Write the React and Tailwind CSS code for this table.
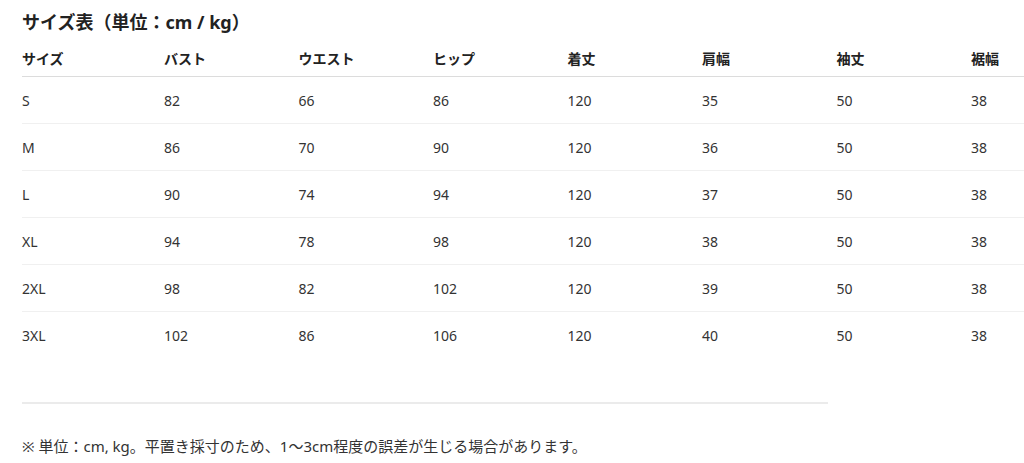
const headers = ['サイズ', 'バスト', 'ウエスト', 'ヒップ', '着丈', '肩幅', '袖丈', '裾幅'];

const rows = [
  ['S', '82', '66', '86', '120', '35', '50', '38'],
  ['M', '86', '70', '90', '120', '36', '50', '38'],
  ['L', '90', '74', '94', '120', '37', '50', '38'],
  ['XL', '94', '78', '98', '120', '38', '50', '38'],
  ['2XL', '98', '82', '102', '120', '39', '50', '38'],
  ['3XL', '102', '86', '106', '120', '40', '50', '38'],
];

export default function App() {
  return (
    <div
      className="min-h-screen w-full overflow-hidden bg-white text-[#333]"
      style={{ fontFamily: '"Noto Sans", "Noto Sans CJK JP", sans-serif' }}
    >
      <div className="pl-[22px] pt-[9px]">
        <h2 className="text-[18px] font-bold leading-[26px] text-[#222]">サイズ表（単位：cm / kg）</h2>

        <div className="mt-[5px] w-[1084px]">
          {/* header */}
          <div className="grid h-[37px] grid-cols-[142px_repeat(7,134.5px)] items-center border-b border-[#dcdcdc] text-[14px] font-semibold text-[#222]">
            {headers.map((h) => (
              <div key={h}>{h}</div>
            ))}
          </div>

          {/* body */}
          {rows.map((r, i) => (
            <div
              key={r[0]}
              className={
                i < rows.length - 1
                  ? 'grid h-[47px] grid-cols-[142px_repeat(7,134.5px)] items-center border-b border-[#f0f0f0] text-[14px]'
                  : 'grid h-[47px] grid-cols-[142px_repeat(7,134.5px)] items-center text-[14px]'
              }
            >
              {r.map((c, j) => (
                <div key={j}>{c}</div>
              ))}
            </div>
          ))}
        </div>

        <div className="mt-[43px] h-0 w-[806px] border-t-2 border-[#ebebeb]"></div>

        <p className="mt-[31px] text-[15px] leading-[22px]">
          ※ 単位：cm, kg。平置き採寸のため、1〜3cm程度の誤差が生じる場合があります。
        </p>
      </div>
    </div>
  );
}
